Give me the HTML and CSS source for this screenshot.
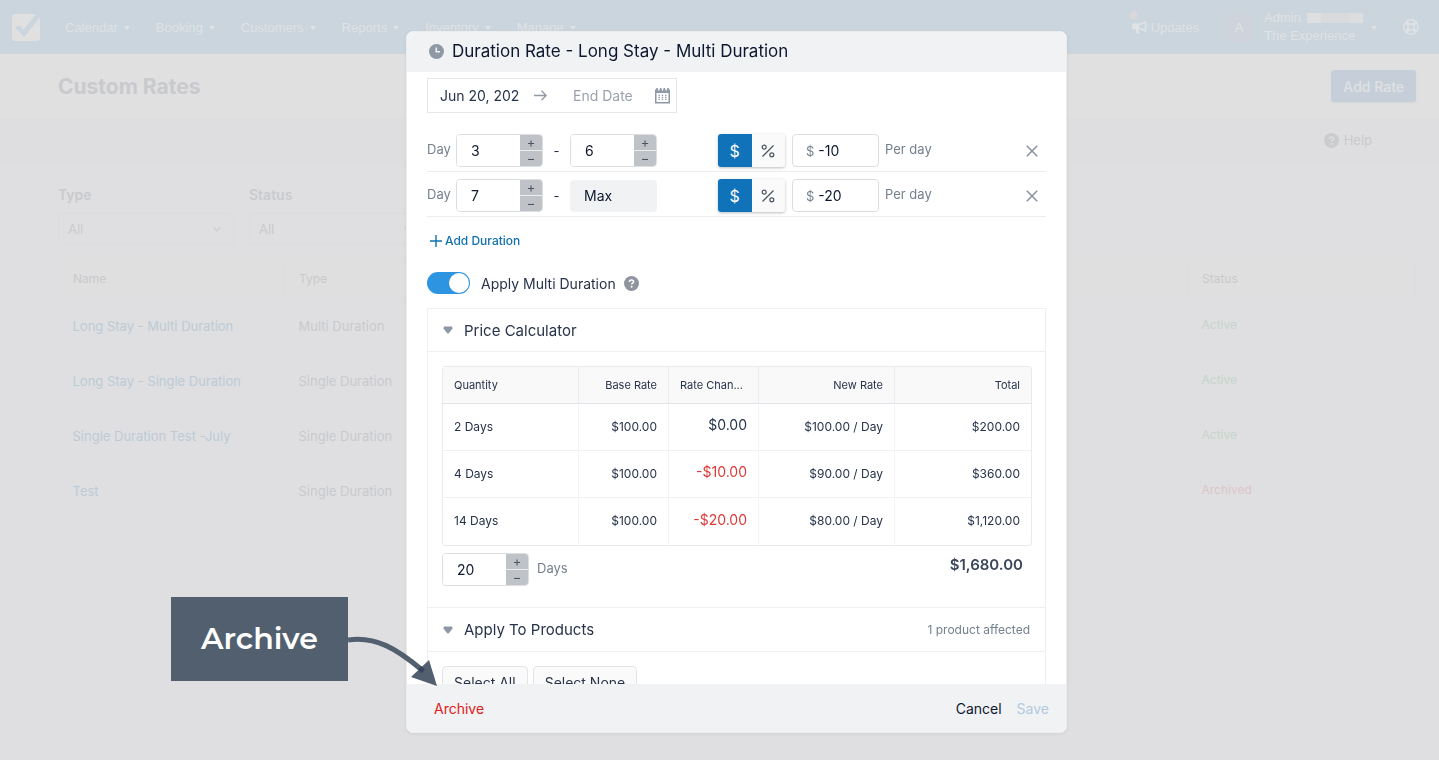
FILE: index.html
```html
<!DOCTYPE html>
<html lang="en">
<head>
  <meta charset="UTF-8" />
  <meta name="viewport" content="width=device-width, initial-scale=1" />
  <title>Custom Rates</title>
  <link rel="stylesheet" href="styles.css">
</head>
<body>
  <nav class="navbar">
    <a href="#" class="logo" aria-label="Home">
      <svg width="28" height="28" viewBox="0 0 28 28">
        <rect x="0" y="1" width="28" height="27" rx="3" fill="#e0e0e1"/>
        <path d="M3 14.5 7.500 12.500 11.500 17 24 1H28V4L12 24Z" fill="#cad5de"/>
      </svg>
    </a>
    <div class="nav-links">
      <a href="#">Calendar <span class="caret"></span></a>
      <a href="#">Booking <span class="caret"></span></a>
      <a href="#">Customers <span class="caret"></span></a>
      <a href="#">Reports <span class="caret"></span></a>
      <a href="#">Inventory <span class="caret"></span></a>
      <a href="#">Manage <span class="caret"></span></a>
    </div>
    <div class="nav-right">
      <a href="#" class="updates">
        <span class="dot"></span>
        <svg width="15" height="13" viewBox="0 0 15 13" fill="#e0e2e4">
          <path fill-rule="evenodd" d="M13.500 0C14 0 14.300.4 14.300.8V4.200C15.200 4.600 15.200 6.400 14.300 6.800V10.200C14.300 11 13.500 11.200 13 10.800C11 9.200 9 8.500 6.500 8.300C6 9.200 6.600 9.800 7 10.500C6.800 11.200 7.200 11.600 7.700 12C6.800 13 5 12.800 4.500 12C4.200 10.800 3.500 9.800 3.800 8.200H1.400C.6 8.200 0 7.600 0 6.900V4C0 3.200.6 2.600 1.400 2.600H5.500C8.500 2.600 10.800 1.800 13 .2C13.200.1 13.300 0 13.500 0ZM12.900 2.100C11.200 3.200 9.400 3.800 7.300 4V7C9.400 7.200 11.200 7.800 12.900 8.900Z"/>
        </svg>
        Updates
      </a>
      <span class="avatar">A</span>
      <a href="#" class="account">
        <span>
          <span class="account-name">Admin <span class="redacted"><i></i><i></i><i></i><i></i></span></span>
          <span>The Experience</span>
        </span>
        <span class="caret"></span>
      </a>
      <a href="#" class="support" aria-label="Support">
        <svg width="16" height="16" viewBox="0 0 16 16" fill="none" stroke="#e0e2e4">
          <circle cx="8" cy="8" r="7.200" stroke-width="1.500"/>
          <circle cx="8" cy="8" r="3" stroke-width="1.400"/>
          <path d="M3.300 3.300 5.600 5.600M12.700 3.300 10.400 5.600M3.300 12.700 5.600 10.400M12.700 12.700 10.400 10.400" stroke-width="3"/>
        </svg>
      </a>
    </div>
  </nav>

  <header class="page-header">
    <h1>Custom Rates</h1>
    <button class="add-rate">Add Rate</button>
  </header>

  <div class="help-bar">
    <a href="#">
      <svg width="15" height="15" viewBox="0 0 15 15">
        <circle cx="7.500" cy="7.500" r="7.500" fill="#cbccce"/>
        <path d="M5.400 5.900C5.400 4.600 6.300 3.900 7.500 3.900S9.600 4.600 9.600 5.700C9.600 7.100 7.600 7.100 7.600 8.600" fill="none" stroke="#dfdfe1" stroke-width="1.500"/>
        <circle cx="7.600" cy="10.800" r="1" fill="#dfdfe1"/>
      </svg>
      Help
    </a>
  </div>

  <main class="content">
    <div class="filters">
      <div class="filter">
        <label for="filter-type">Type</label>
        <div class="select-wrap">
          <select id="filter-type"><option>All</option></select>
          <svg width="8" height="5" viewBox="0 0 8 5"><path d="M.7.7 4 4 7.300.7" fill="none" stroke="#cdced0" stroke-width="1.200"/></svg>
        </div>
      </div>
      <div class="filter">
        <label for="filter-status">Status</label>
        <div class="select-wrap">
          <select id="filter-status"><option>All</option></select>
          <svg width="8" height="5" viewBox="0 0 8 5"><path d="M.7.7 4 4 7.300.7" fill="none" stroke="#cdced0" stroke-width="1.200"/></svg>
        </div>
      </div>
    </div>

    <table class="rates">
      <thead>
        <tr><th class="col-name">Name</th><th>Type</th><th class="col-status">Status</th></tr>
      </thead>
      <tbody>
        <tr><td><a href="#">Long Stay - Multi Duration</a></td><td>Multi Duration</td><td class="active">Active</td></tr>
        <tr><td><a href="#">Long Stay - Single Duration</a></td><td>Single Duration</td><td class="active">Active</td></tr>
        <tr><td><a href="#">Single Duration Test -July</a></td><td>Single Duration</td><td class="active">Active</td></tr>
        <tr><td><a href="#">Test</a></td><td>Single Duration</td><td class="archived">Archived</td></tr>
      </tbody>
    </table>
  </main>

  <div class="overlay">
    <div class="modal" role="dialog" aria-labelledby="modal-title">
      <div class="modal-header">
        <svg width="15" height="15" viewBox="0 0 15 15">
          <circle cx="7.500" cy="7.500" r="7.500" fill="#8f99a6"/>
          <path d="M7.200 3.500V7.800H11" fill="none" stroke="#f1f2f4" stroke-width="1.500"/>
        </svg>
        <h2 id="modal-title">Duration Rate - Long Stay - Multi Duration</h2>
      </div>

      <div class="modal-body">
        <div class="date-range">
          <input type="text" value="Jun 20, 202" aria-label="Start date">
          <svg class="arrow" width="13" height="11" viewBox="0 0 13 11"><path d="M0 5.500H12M7.500.8 12.200 5.500 7.500 10.200" fill="none" stroke="#8f99a6" stroke-width="1.300"/></svg>
          <input type="text" placeholder="End Date" aria-label="End date">
          <svg width="15" height="16" viewBox="0 0 15 16">
            <path d="M0 1.500H15V15.500H0Z" fill="#8f99a6"/>
            <path d="M1.500 5H13.500V14H1.500Z" fill="#fff"/>
            <path d="M2 0V3M5.700 0V3M9.300 0V3M13 0V3" stroke="#8f99a6" stroke-width="1.600"/>
            <path d="M3.800 0V3M7.500 0V3M11.200 0V3" stroke="#fff" stroke-width=".8"/>
            <path d="M3.500 7.300H11.700M3.500 9.300H11.700M3.500 11.300H11.700" stroke="#8f99a6" stroke-width="1.200" stroke-dasharray="1.400 1.900"/>
          </svg>
        </div>

        <div class="duration-row">
          <label for="from-1">Day</label>
          <div class="stepper">
            <input id="from-1" type="text" value="3">
            <div class="steps"><button aria-label="Increase">+</button><button aria-label="Decrease">−</button></div>
          </div>
          <span class="dash">-</span>
          <div class="stepper">
            <input type="text" value="6" aria-label="To day">
            <div class="steps"><button aria-label="Increase">+</button><button aria-label="Decrease">−</button></div>
          </div>
          <div class="unit"><button class="on">$</button><button aria-label="Percent"><svg width="14" height="14" viewBox="0 0 14 14" fill="none" stroke="#4a5563" stroke-width="1.200"><circle cx="3.200" cy="3.200" r="2"/><circle cx="10.800" cy="10.800" r="2"/><path d="M12.500 1.500 1.500 12.500"/></svg></button></div>
          <div class="amount"><span>$</span><input type="text" value="-10" aria-label="Amount"></div>
          <span class="per-day">Per day</span>
          <button class="remove" aria-label="Remove"><svg width="12" height="12" viewBox="0 0 12 12"><path d="M.8.8 11.200 11.200M11.200.8.8 11.200" stroke="#8791a0" stroke-width="1.500"/></svg></button>
        </div>

        <div class="duration-row">
          <label for="from-2">Day</label>
          <div class="stepper">
            <input id="from-2" type="text" value="7">
            <div class="steps"><button aria-label="Increase">+</button><button aria-label="Decrease">−</button></div>
          </div>
          <span class="dash">-</span>
          <input class="max" type="text" value="Max" aria-label="To day" disabled>
          <div class="unit"><button class="on">$</button><button aria-label="Percent"><svg width="14" height="14" viewBox="0 0 14 14" fill="none" stroke="#4a5563" stroke-width="1.200"><circle cx="3.200" cy="3.200" r="2"/><circle cx="10.800" cy="10.800" r="2"/><path d="M12.500 1.500 1.500 12.500"/></svg></button></div>
          <div class="amount"><span>$</span><input type="text" value="-20" aria-label="Amount"></div>
          <span class="per-day">Per day</span>
          <button class="remove" aria-label="Remove"><svg width="12" height="12" viewBox="0 0 12 12"><path d="M.8.8 11.200 11.200M11.200.8.8 11.200" stroke="#8791a0" stroke-width="1.500"/></svg></button>
        </div>

        <button class="add-duration">
          <svg width="12" height="12" viewBox="0 0 12 12"><path d="M6 0V12M0 6H12" stroke="#1071b0" stroke-width="1.400"/></svg>
          Add Duration
        </button>

        <div class="multi">
          <input type="checkbox" id="multi" class="switch" checked>
          <label for="multi">Apply Multi Duration</label>
          <svg width="15" height="15" viewBox="0 0 15 15">
            <circle cx="7.500" cy="7.500" r="7.500" fill="#8f959e"/>
            <path d="M5.400 5.900C5.400 4.600 6.300 3.900 7.500 3.900S9.600 4.600 9.600 5.700C9.600 7.100 7.600 7.100 7.600 8.600" fill="none" stroke="#fff" stroke-width="1.500"/>
            <circle cx="7.600" cy="10.800" r="1" fill="#fff"/>
          </svg>
        </div>

        <div class="panel">
          <button class="panel-header">
            <svg width="10" height="8" viewBox="0 0 10 8"><path d="M1 .5H9L9.600 2.500 5.600 7.500H4.400L.4 2.500Z" fill="#8f99a6"/></svg>
            <span>Price Calculator</span>
          </button>
          <div class="panel-body">
            <table class="prices">
              <thead>
                <tr><th>Quantity</th><th>Base Rate</th><th>Rate Chan...</th><th>New Rate</th><th>Total</th></tr>
              </thead>
              <tbody>
                <tr><td>2 Days</td><td>$100.00</td><td class="change">$0.00</td><td>$100.00 / Day</td><td>$200.00</td></tr>
                <tr><td>4 Days</td><td>$100.00</td><td class="change minus">-$10.00</td><td>$90.00 / Day</td><td>$360.00</td></tr>
                <tr><td>14 Days</td><td>$100.00</td><td class="change minus">-$20.00</td><td>$80.00 / Day</td><td>$1,120.00</td></tr>
              </tbody>
            </table>
            <div class="calc">
              <div class="stepper">
                <input id="days" type="text" value="20">
                <div class="steps"><button aria-label="Increase">+</button><button aria-label="Decrease">−</button></div>
              </div>
              <label for="days">Days</label>
              <strong>$1,680.00</strong>
            </div>
          </div>
          <button class="panel-header">
            <svg width="10" height="8" viewBox="0 0 10 8"><path d="M1 .5H9L9.600 2.500 5.600 7.500H4.400L.4 2.500Z" fill="#8f99a6"/></svg>
            <span>Apply To Products</span>
            <small>1 product affected</small>
          </button>
          <div class="panel-body product-actions">
            <button>Select All</button>
            <button>Select None</button>
          </div>
        </div>
      </div>

      <div class="modal-footer">
        <button class="archive">Archive</button>
        <button class="cancel">Cancel</button>
        <button class="save" disabled>Save</button>
      </div>
    </div>
  </div>

  <div class="callout">
    <span>Archive</span>
    <svg width="90" height="60" viewBox="0 0 90 60">
      <path d="M0 13C28 9 49 22 74 43" fill="none" stroke="#525f6f" stroke-width="5"/>
      <path d="M81 33 89 59 63 50Z" fill="#525f6f"/>
      <path d="M73 39 77 42.500 73.500 46 70 42.500Z" fill="#36445a"/>
    </svg>
  </div>
</body>
</html>
```
FILE: styles.css
```css
* {
  box-sizing: border-box;
}
body {
  font-family: Inter, sans-serif;
  font-size: 13px;
  background: #dfdfe1;
  color: #c9cacd;
  margin: 0;
  height: 100vh;
  overflow: hidden;
}
a {
  color: inherit;
  text-decoration: none;
}
button, input, select {
  font: inherit;
  color: inherit;
  margin: 0;
}
button {
  background: none;
  border: none;
  padding: 0;
  cursor: pointer;
}
input:focus {
  outline: none;
}
svg {
  display: block;
  flex: none;
}

/* top navigation */
.navbar {
  display: flex;
  align-items: center;
  height: 54px;
  padding: 0 20px 0 12px;
  background: #cad5de;
  color: #e0e2e4;
  font-family: "Liberation Sans", sans-serif;
}
.nav-links {
  display: flex;
  gap: 26px;
  margin-left: 25px;
}
.nav-links a {
  display: flex;
  align-items: center;
  gap: 6px;
}
.caret {
  margin-top: 2px;
  border: 3px solid transparent;
  border-top: 4px solid #e0e2e4;
  border-bottom: 0;
}
.nav-right {
  display: flex;
  align-items: center;
  margin-left: auto;
}
.updates {
  position: relative;
  display: flex;
  align-items: center;
  gap: 4px;
}
.dot {
  position: absolute;
  top: -9px;
  left: -2px;
  width: 8px;
  height: 8px;
  border-radius: 50%;
  background: #d9d7d9;
}
.avatar {
  width: 28px;
  height: 29px;
  margin: 0 11px 0 26px;
  border-radius: 4px;
  background: #cfd4dc;
  text-align: center;
  line-height: 29px;
}
.account {
  display: flex;
  align-items: center;
  gap: 8px;
  line-height: 18px;
}
.account > span > span {
  display: flex;
  align-items: center;
  gap: 6px;
}
.redacted {
  display: flex;
}
.redacted i {
  width: 14px;
  height: 10px;
  background: #d8dadd;
}
.redacted i:first-child {
  background: #dedfe0;
}
.redacted i:last-child {
  background: #dcdddf;
}
.support {
  margin-left: 26px;
}

/* page */
.page-header {
  display: flex;
  align-items: center;
  justify-content: space-between;
  height: 64px;
  padding: 4px 23px 4px 58px;
  background: #e0e0e0;
}
h1 {
  margin: 0;
  font-size: 21px;
  font-weight: 700;
}
.add-rate {
  height: 32px;
  padding: 0 12px;
  border-radius: 3px;
  background: #c6cfd9;
  color: #e0e1e3;
  font-size: 14px;
  font-weight: 500;
  box-shadow: 0 1px 3px #d4d6d9;
}
.help-bar {
  display: flex;
  justify-content: flex-end;
  height: 44px;
  padding-right: 67px;
  background: #dedee0;
}
.help-bar a {
  display: flex;
  align-items: center;
  gap: 5px;
}
.content {
  padding: 24px 23px 0 58px;
}
.filters {
  display: flex;
  gap: 15px;
}
.filter {
  width: 176px;
}
.filter label {
  display: block;
  margin-bottom: 9px;
  font-size: 14px;
  font-weight: 600;
  line-height: 18px;
}
.select-wrap {
  display: flex;
  align-items: center;
  height: 32px;
  padding: 0 12px 0 9px;
  border: 1px solid #dcdcde;
  border-radius: 3px;
}
.select-wrap select {
  flex: 1;
  border: none;
  background: none;
  appearance: none;
}
.rates {
  width: 100%;
  margin-top: 12px;
  border-collapse: collapse;
}
.rates th {
  height: 42px;
  padding: 0 14px;
  background: #dfdfdf;
  border: 1px solid #dddddf;
  font-size: 12px;
  font-weight: 400;
  text-align: left;
}
.rates td {
  height: 55px;
  padding: 0 14px 2px;
}
.rates a {
  color: #bccbd6;
}
.col-name {
  width: 226px;
}
.col-status {
  width: 228px;
}
.rates .active, .rates .archived {
  padding-bottom: 6px;
  font-size: 12px;
}
.active {
  color: #c5d6ca;
}
.archived {
  color: #dcc5c7;
}

/* modal */
.overlay {
  position: fixed;
  inset: 0;
  display: flex;
  justify-content: center;
  padding: 31px 0 27px 34px;
}
.modal {
  display: flex;
  flex-direction: column;
  width: 46%;
  min-width: 661px;
  border: 1px solid #eceded;
  border-radius: 7px;
  background: #fff;
  color: #26334a;
  overflow: hidden;
  box-shadow: 0 1px 4px rgba(0, 0, 0, 0.06);
}
.modal-header {
  display: flex;
  flex: none;
  align-items: center;
  gap: 8px;
  height: 40px;
  padding: 0 22px 2px;
  background: #f1f2f4;
  color: #0d1830;
}
h2 {
  margin: 0;
  font-size: 17px;
  font-weight: 400;
}
.modal-body {
  flex: 1;
  padding: 6px 20px 0;
  overflow: hidden;
}
.date-range {
  display: flex;
  align-items: center;
  width: 250px;
  height: 35px;
  margin-bottom: 14px;
  padding: 0 5px 0 12px;
  border: 1px solid #e6e7ea;
  font-size: 14px;
}
.date-range input {
  flex: none;
  width: 82px;
  padding: 0;
  border: none;
  background: none;
}
.date-range .arrow {
  margin: 0 26px 0 12px;
}
.date-range ::placeholder {
  color: #9aa2ad;
}
.duration-row {
  display: flex;
  align-items: center;
  height: 45px;
  padding: 7px 0 4px;
  border-bottom: 1px solid #ebecee;
}
.duration-row label {
  width: 29px;
}
.duration-row label, .per-day, .calc label {
  color: #74808e;
  padding-bottom: 3px;
}
.stepper {
  display: flex;
  width: 87px;
  height: 33px;
  border: 1px solid #dcdee1;
  border-radius: 4px;
  overflow: hidden;
}
.stepper input {
  flex: 1;
  min-width: 0;
  padding: 0 0 0 14px;
  border: none;
  color: #0d1830;
  font-size: 14px;
}
.steps {
  display: grid;
  gap: 1px;
  width: 22px;
  background: #eceded;
}
.steps button {
  height: 15px;
  background: #bfc3c7;
  color: #4a5563;
  line-height: 13px;
}
.dash {
  width: 27px;
  text-align: center;
}
.max {
  width: 87px;
  height: 32px;
  padding: 0 14px;
  border: none;
  border-radius: 4px;
  background: #f1f2f4;
  color: #0d1830;
  font-size: 14px;
}
.unit {
  display: flex;
  width: 67px;
  height: 33px;
  margin: 0 7px 0 61px;
  border-radius: 3px;
  background: #fafafb;
  box-shadow: 0 1px 3px rgba(30, 40, 60, 0.3);
  font-size: 16px;
}
.unit button {
  display: flex;
  flex: 1;
  align-items: center;
  justify-content: center;
}
.unit .on {
  border-radius: 3px 0 0 3px;
  background: #1072b8;
  color: #fff;
}
.amount {
  display: flex;
  align-items: center;
  gap: 4px;
  width: 87px;
  height: 33px;
  margin-right: 6px;
  padding: 0 13px;
  border: 1px solid #dcdee1;
  border-radius: 4px;
}
.amount span {
  color: #74808e;
}
.amount input {
  width: 45px;
  padding: 0;
  border: none;
  color: #0d1830;
  font-size: 14px;
}
.remove {
  margin: 0 8px 0 auto;
}
.add-duration {
  display: flex;
  align-items: center;
  gap: 3px;
  margin: 16px 0 0 3px;
  color: #1071b0;
  font-size: 12px;
  font-weight: 500;
  line-height: 16px;
}
.multi {
  display: flex;
  align-items: center;
  height: 22px;
  margin: 23px 0 14px;
  font-size: 14px;
}
.multi label {
  margin: 0 8px 0 11px;
}
.switch {
  width: 43px;
  height: 22px;
  padding: 1px;
  border-radius: 11px;
  background: #2c94e0;
  appearance: none;
}
.switch::before {
  content: "";
  display: block;
  width: 20px;
  height: 20px;
  border-radius: 50%;
  background: #fff;
}
.switch:checked::before {
  margin-left: auto;
}

/* accordion panels */
.panel {
  border: 1px solid #eeeff1;
}
.panel-header {
  display: flex;
  align-items: center;
  gap: 11px;
  width: 100%;
  height: 43px;
  padding: 0 15px;
  border-bottom: 1px solid #eeeff1;
  font-size: 15px;
}
.panel-header small {
  margin-left: auto;
  color: #74808e;
  font-size: 12px;
}
.panel-body {
  padding: 14px 15px 21px 14px;
}
.panel-body + .panel-header {
  height: 45px;
  border-top: 1px solid #eeeff1;
}
.prices {
  width: 100%;
  table-layout: fixed;
  border: 1px solid #e9eaec;
  border-radius: 3px;
  border-spacing: 0;
}
.prices th, .prices td {
  padding: 0 11px;
  border-right: 1px solid #f3f4f5;
  text-align: right;
}
.prices th {
  width: 136px;
  height: 37px;
  background: #f9f9fa;
  border-color: #ebecee;
  border-bottom: 1px solid #e3e5ea;
  font-size: 11px;
  font-weight: 400;
}
.prices th:nth-child(2), .prices th:nth-child(3) {
  width: 90px;
}
.prices th:nth-child(3) {
  text-align: left;
}
.prices td {
  height: 47px;
  padding-bottom: 2px;
  border-bottom: 1px solid #f1f2f4;
  font-size: 12px;
}
.prices tr > :first-child {
  text-align: left;
}
.prices tr > :last-child {
  border-right: none;
}
.prices tbody tr:last-child td {
  border-bottom: none;
}
.prices .change {
  padding-bottom: 5px;
  font-size: 14px;
}
.prices .minus {
  color: #dc3a38;
}
.calc {
  display: flex;
  align-items: center;
  gap: 8px;
  margin-top: 7px;
}
.calc strong {
  margin: 0 7px 0 auto;
  padding-bottom: 11px;
  color: #3a475a;
  font-size: 15px;
  font-weight: 600;
}
.product-actions {
  display: flex;
  gap: 5px;
}
.product-actions button {
  height: 33px;
  padding: 0 11px;
  border: 1px solid #e2e4e7;
  border-radius: 4px;
  background: #fafafb;
  font-size: 14px;
}
.modal-footer {
  display: flex;
  flex: none;
  align-items: center;
  gap: 15px;
  height: 48px;
  padding: 0 17px 0 27px;
  background: #f1f2f4;
  color: #0d1830;
  font-size: 14px;
}
.archive {
  margin-right: auto;
  color: #dd2018;
}
.save {
  color: #b3cadf;
}

/* annotation over the page */
.callout {
  position: absolute;
  top: 597px;
  left: 171px;
  display: flex;
  align-items: flex-start;
}
.callout span {
  width: 177px;
  height: 84px;
  background: #525f6f;
  color: #fff;
  font-family: Montserrat, Inter, sans-serif;
  font-size: 30px;
  font-weight: 600;
  line-height: 84px;
  text-align: center;
}
.callout svg {
  margin-top: 30px;
}
```
